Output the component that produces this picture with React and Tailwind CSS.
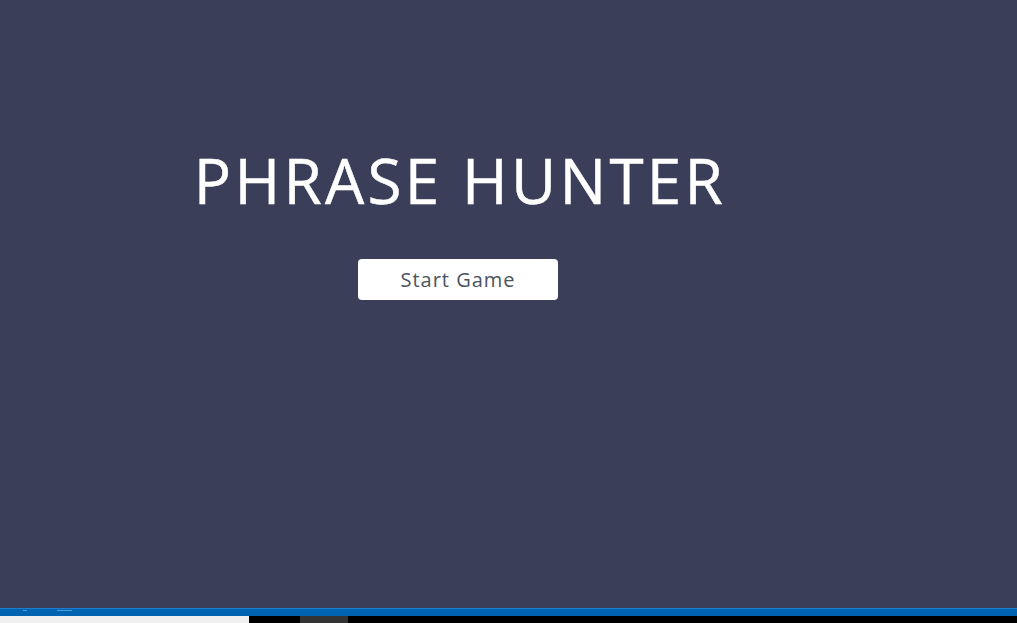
export default function App() {
  return (
    <div className="w-[1017px] h-[623px] flex flex-col bg-black overflow-hidden">
      <div className="h-[608px] bg-[#3a3e58] flex flex-col">
        <div className="w-[916px] flex flex-col items-center pt-[142px]">
          <h1 className="ml-[4px] text-white text-[62px] leading-[76px] font-normal tracking-[3.3px] [font-family:'Open_Sans',sans-serif] [-webkit-text-stroke:0.5px_white]">
            PHRASE HUNTER
          </h1>
          <button className="mt-[41px] w-[200px] h-[41px] bg-white rounded-[4px] text-[#4a5460] text-[20px] tracking-[1px] [font-family:'Open_Sans',sans-serif]">
            Start Game
          </button>
        </div>
      </div>
      <div className="h-[8px] bg-[#0063b1] border-t border-[#1a7dd0] relative">
        <div className="absolute left-[23px] top-[1px] w-[4px] h-[1px] bg-[#4f9ad8]" />
        <div className="absolute left-[57px] top-[1px] w-[15px] h-[1px] bg-[#4f9ad8]" />
      </div>
      <div className="flex-1 flex">
        <div className="w-[249px] bg-[#f0f0f0]" />
        <div className="w-[51px]" />
        <div className="w-[48px] bg-[#333333]" />
      </div>
    </div>
  );
}
